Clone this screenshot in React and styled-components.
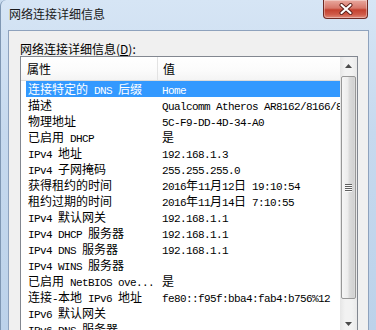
import styled, { createGlobalStyle, css } from "styled-components";

const GlobalStyle = createGlobalStyle`
    html, body {
        margin: 0;
        padding: 0;
        width: 376px;
        height: 330px;
        overflow: hidden;
        background: #c8dbef;
    }
    * { box-sizing: border-box; }
`

const Window = styled.div`
    width: 376px;
    height: 330px;
    display: flex;
    flex-direction: column;
    padding: 0 7px;
    background: linear-gradient(to bottom, #d6e5f5 0%, #c6d9ee 40%, #bcd2ea 100%);
    border-left: 1px solid #7f97b3;
    border-top-left-radius: 6px;
    overflow: hidden;
    font-family: "Noto Sans CJK SC", sans-serif;
    font-size: 12px;
    color: #000;
`

const TitleBar = styled.div`
    height: 30px;
    display: flex;
    align-items: flex-start;
    flex-shrink: 0;
`

const Title = styled.div`
    padding-top: 6px;
    padding-left: 1px;
    line-height: 16px;
    color: #1a1a1a;
`

const CloseButton = styled.div`
    margin-left: auto;
    margin-right: 1px;
    width: 45px;
    height: 19px;
    border: 1px solid #6e2a24;
    border-top: none;
    border-radius: 0 0 4px 4px;
    background: linear-gradient(to bottom, #e9a99f 0%, #d7776a 45%, #c4412f 55%, #cf5a48 80%, #e08a7a 100%);
    box-shadow: inset 0 0 0 1px rgba(255,255,255,.35);
    display: flex;
    align-items: center;
    justify-content: center;
`

const Client = styled.div`
    flex: 1;
    background: #f0f0f0;
    border: 1px solid #8ea2bd;
    border-bottom: none;
    padding: 11px 10px 0 11px;
    display: flex;
    flex-direction: column;
`

const Label = styled.div`
    line-height: 14px;
    height: 14px;
    color: #000;
    & u { text-decoration: underline; }
`

const ListBox = styled.div`
    display: flex;
    height: 277px;
    flex-shrink: 0;
    border: 1px solid #828790;
    background: #fff;
`

const ListContent = styled.div`
    flex: 1;
    overflow: hidden;
`

const Header = styled.div`
    display: flex;
    height: 24px;
    border-bottom: 1px solid #dcdcdc;
    background: linear-gradient(to bottom, #ffffff 0%, #fbfbfb 60%, #f4f4f4 100%);
`

const HeadCell = styled.div`
    line-height: 23px;
    ${({ first }) => first ? css`
        width: 137px;
        padding-left: 6px;
        border-right: 1px solid #e3e3e3;
    ` : css`
        flex: 1;
        padding-left: 5px;
    `}
`

const Row = styled.div`
    display: flex;
    height: 16px;
    line-height: 16px;
    margin-left: 5px;
    white-space: nowrap;
    ${({ selected }) => selected && css`
        background: #3399ff;
        color: #fff;
    `}
`

const KeyCell = styled.div`
    width: 132px;
    padding-left: 2px;
    overflow: hidden;
`

const ValueCell = styled.div`
    flex: 1;
    padding-left: 4px;
    overflow: hidden;
`

const Latin = styled.span`
    font-family: "Liberation Mono", monospace;
    font-size: 11px;
    letter-spacing: -0.6px;
`

const ScrollBar = styled.div`
    width: 17px;
    display: flex;
    flex-direction: column;
    background: linear-gradient(to right, #e6e6e6 0%, #f2f2f2 30%, #f2f2f2 70%, #e9e9e9 100%);
`

const ArrowButton = styled.div`
    height: 17px;
    flex-shrink: 0;
    display: flex;
    align-items: center;
    justify-content: center;
`

const Track = styled.div`
    flex: 1;
    padding: 2px 1px 0 1px;
`

const Thumb = styled.div`
    height: 223px;
    border: 1px solid #979797;
    border-radius: 2px;
    background: linear-gradient(to right, #f6f6f6 0%, #ececec 45%, #dcdcdc 55%, #d2d2d2 90%, #dedede 100%);
    display: flex;
    align-items: center;
    justify-content: center;
`

const Grip = styled.div`
    width: 7px;
    height: 8px;
    background: repeating-linear-gradient(to bottom, #5f5f5f 0 1px, #fafafa 1px 2px);
`

const rows = [
    ["连接特定的 DNS 后缀", "Home"],
    ["描述", "Qualcomm Atheros AR8162/8166/8168 PCI-E Fast Ethernet Controller"],
    ["物理地址", "5C-F9-DD-4D-34-A0"],
    ["已启用 DHCP", "是"],
    ["IPv4 地址", "192.168.1.3"],
    ["IPv4 子网掩码", "255.255.255.0"],
    ["获得租约的时间", "2016年11月12日 19:10:54"],
    ["租约过期的时间", "2016年11月14日 7:10:55"],
    ["IPv4 默认网关", "192.168.1.1"],
    ["IPv4 DHCP 服务器", "192.168.1.1"],
    ["IPv4 DNS 服务器", "192.168.1.1"],
    ["IPv4 WINS 服务器", ""],
    ["已启用 NetBIOS ove...", "是"],
    ["连接-本地 IPv6 地址", "fe80::f95f:bba4:fab4:b756%12"],
    ["IPv6 默认网关", ""],
    ["IPv6 DNS 服务器", ""],
];

// ascii runs get the narrow mono font, like SimSun's half width chars
function Mixed({ text }) {
    return text.split(/([\x00-\x7f]+)/).filter(Boolean).map((part, i) =>
        /^[\x00-\x7f]+$/.test(part) ? <Latin key={i}>{part}</Latin> : <span key={i}>{part}</span>
    );
}

function Arrow({ down }) {
    return (
        <svg width="7" height="4" viewBox="0 0 7 4">
            <polygon points={down ? "0,0 7,0 3.5,4" : "0,4 7,4 3.5,0"} fill="#4a4a4a" />
        </svg>
    );
}

export default function App() {
    return (
        <>
            <GlobalStyle />
            <Window>
                <TitleBar>
                    <Title>网络连接详细信息</Title>
                    <CloseButton>
                        <svg width="16" height="12" viewBox="0 0 16 12">
                            <path d="M3.5 2 L12.5 10 M12.5 2 L3.5 10" stroke="#5a1e18" strokeWidth="4" strokeLinecap="round" />
                            <path d="M3.5 2 L12.5 10 M12.5 2 L3.5 10" stroke="#fff" strokeWidth="2.2" strokeLinecap="round" />
                        </svg>
                    </CloseButton>
                </TitleBar>
                <Client>
                    <Label>网络连接详细信息(<u>D</u>):</Label>
                    <ListBox>
                        <ListContent>
                            <Header>
                                <HeadCell first>属性</HeadCell>
                                <HeadCell>值</HeadCell>
                            </Header>
                            {rows.map(([key, value], index) =>
                                <Row key={index} selected={index === 0}>
                                    <KeyCell><Mixed text={key} /></KeyCell>
                                    <ValueCell><Mixed text={value} /></ValueCell>
                                </Row>
                            )}
                        </ListContent>
                        <ScrollBar>
                            <ArrowButton><Arrow /></ArrowButton>
                            <Track>
                                <Thumb><Grip /></Thumb>
                            </Track>
                            <ArrowButton><Arrow down /></ArrowButton>
                        </ScrollBar>
                    </ListBox>
                </Client>
            </Window>
        </>
    );
}
